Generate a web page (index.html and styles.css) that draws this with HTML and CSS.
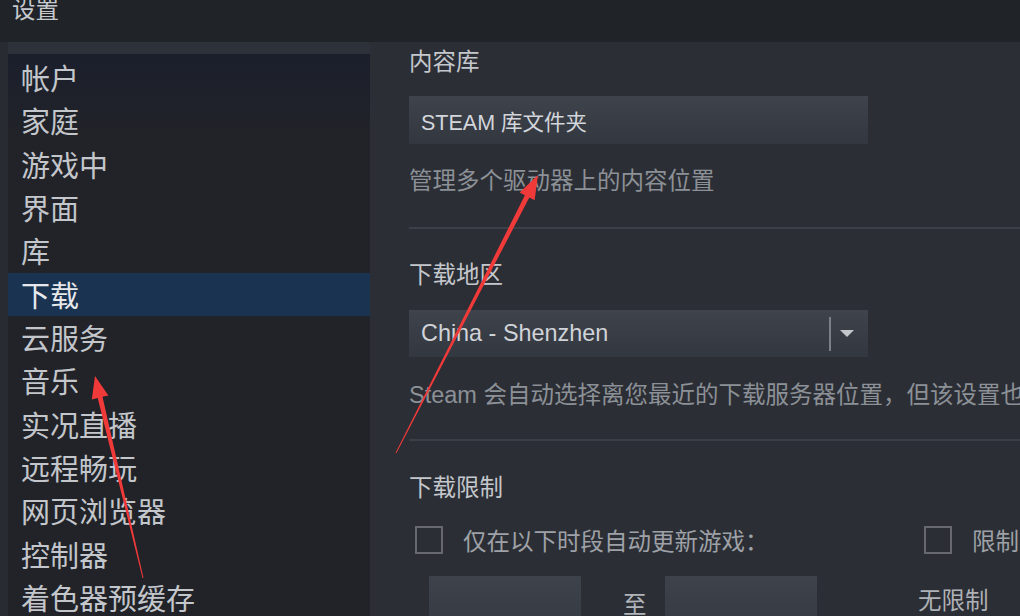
FILE: index.html
```html
<!DOCTYPE html>
<html lang="zh-CN">
<head>
    <meta charset="UTF-8">
    <title>设置</title>
    <link rel="stylesheet" href="styles.css">
</head>
<body>
    <div class="window">
        <header class="titlebar"><span>设置</span></header>

        <div class="main">
            <nav class="sidebar">
                <ul class="menu">
                    <li>帐户</li>
                    <li>家庭</li>
                    <li>游戏中</li>
                    <li>界面</li>
                    <li>库</li>
                    <li class="active">下载</li>
                    <li>云服务</li>
                    <li>音乐</li>
                    <li>实况直播</li>
                    <li>远程畅玩</li>
                    <li>网页浏览器</li>
                    <li>控制器</li>
                    <li>着色器预缓存</li>
                </ul>
            </nav>

            <main class="content">
                <h3 class="label">内容库</h3>
                <div class="field">STEAM 库文件夹</div>
                <p class="desc">管理多个驱动器上的内容位置</p>

                <div class="divider"></div>

                <h3 class="label label-gap">下载地区</h3>
                <div class="select">
                    <span class="select-value">China - Shenzhen</span>
                    <span class="select-sep"></span>
                    <span class="select-caret"><i></i></span>
                </div>
                <p class="desc desc-gap">Steam 会自动选择离您最近的下载服务器位置，但该设置也可以被覆盖</p>

                <div class="divider divider-gap"></div>

                <h3 class="label label-gap2">下载限制</h3>
                <div class="limits">
                    <label class="check"><span class="box"></span>仅在以下时段自动更新游戏：</label>
                    <label class="check"><span class="box"></span>限制带宽为：</label>
                    <div class="time-row">
                        <span class="time-box"></span>
                        <span class="to">至</span>
                        <span class="time-box"></span>
                    </div>
                    <div class="bandwidth">无限制</div>
                </div>
            </main>
        </div>

        <svg class="marks" width="1020" height="616" viewBox="0 0 1020 616">
            <polygon points="142.5,578.1 97.7,398.0 91.8,399.4 95,376 108.4,395.4 102.5,396.8 143.5,577.9" />
            <polygon points="395.6,452.8 524.9,195.3 519.6,192.6 538,175 534.6,200.2 529.3,197.5 396.4,453.2" />
        </svg>
    </div>
</body>
</html>
```

FILE: styles.css
```css
* {
    margin: 0;
    padding: 0;
    box-sizing: border-box;
}

body {
    font-family: "Liberation Sans", "Noto Sans CJK SC", sans-serif;
    background-color: #2a2d33;
    overflow: hidden;
}

.window {
    position: relative;
    width: 1020px;
    height: 616px;
    overflow: hidden;
    display: flex;
    flex-direction: column;
}

.titlebar {
    height: 42px;
    flex-shrink: 0;
    background-color: #202328;
    color: #c6c9ce;
    font-size: 23.5px;
    line-height: 20px;
    padding-left: 12px;
}

.main {
    flex: 1;
    display: flex;
    min-height: 0;
    padding-left: 8px;
    background-color: #282b31;
}

/* left menu */
.sidebar {
    width: 362px;
    flex-shrink: 0;
    background: linear-gradient(to bottom, #2d3139 0, #2d3139 12px, #1b1f2c 12px, #212329 90px, #212328 100%);
}

.menu {
    list-style: none;
    padding-top: 14px;
}

.menu li {
    height: 43.33px;
    line-height: 38.33px;
    padding: 5px 0 0 13px;
    font-size: 29px;
    color: #c3c6cb;
}

.menu li.active {
    background-color: #1a3351;
    color: #e6e8eb;
}

/* right pane */
.content {
    flex: 1;
    background-color: #2b2e34;
    padding: 6px 0 0 39px;
    white-space: nowrap;
    overflow: hidden;
}

.label {
    font-size: 23.5px;
    font-weight: normal;
    line-height: 28px;
    color: #c4c7cc;
}

.label-gap {
    margin-top: 32px;
}

.label-gap2 {
    margin-top: 33px;
}

.field {
    width: 459px;
    height: 48px;
    margin-top: 20px;
    padding-left: 12px;
    display: flex;
    align-items: center;
    background: linear-gradient(#3e434c, #33373f);
    color: #d3d6db;
    font-size: 21.5px;
}

.desc {
    font-size: 23.5px;
    line-height: 28px;
    color: #8c9097;
    margin-top: 23px;
}

.desc-gap {
    margin-top: 24px;
}

.divider {
    height: 2px;
    background-color: #3b3f47;
    margin-top: 32px;
}

.divider-gap {
    margin-top: 30px;
}

.select {
    width: 459px;
    height: 47px;
    margin-top: 21px;
    display: flex;
    align-items: center;
    background: linear-gradient(#3e434c, #33373f);
}

.select-value {
    flex: 1;
    padding-left: 12px;
    font-size: 23.4px;
    color: #d0d3d8;
}

.select-sep {
    width: 2px;
    height: 34px;
    background-color: #7b7f86;
}

.select-caret {
    padding: 0 14px 0 9px;
    display: flex;
    align-items: center;
}

.select-caret i {
    width: 0;
    height: 0;
    border-left: 7.5px solid transparent;
    border-right: 7.5px solid transparent;
    border-top: 7px solid #c3c6cb;
}

/* download limits */
.limits {
    display: grid;
    grid-template-columns: 509px 1fr;
    row-gap: 22px;
    margin-top: 24px;
}

.check {
    display: flex;
    align-items: center;
    gap: 20px;
    padding-left: 6px;
    height: 28px;
    font-size: 23.5px;
    color: #9ea1a7;
}

.box {
    width: 28px;
    height: 28px;
    border: 2px solid #67696e;
}

.time-row {
    display: flex;
    align-items: center;
    padding-left: 20px;
}

.time-box {
    width: 152px;
    height: 50px;
    background: linear-gradient(#3d424b, #373b43);
}

.to {
    font-size: 23.5px;
    color: #b0b3b8;
    margin: 4px 18px 0 42px;
}

.bandwidth {
    font-size: 23.5px;
    line-height: 50px;
    color: #aeb1b6;
}

/* red annotation arrows */
.marks {
    position: absolute;
    top: 0;
    left: 0;
    pointer-events: none;
}

.marks polygon {
    fill: #f03a3a;
}
```
